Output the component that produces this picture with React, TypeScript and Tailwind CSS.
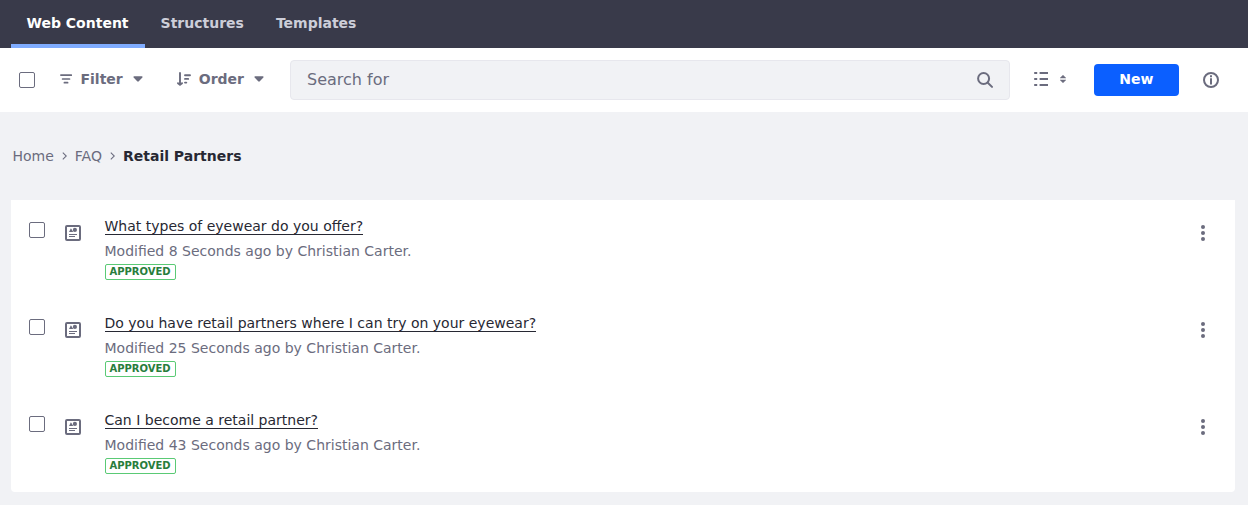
import React from "react";

const tabs = ["Web Content", "Structures", "Templates"];

const entries = [
  { title: "What types of eyewear do you offer?", age: "8 Seconds" },
  { title: "Do you have retail partners where I can try on your eyewear?", age: "25 Seconds" },
  { title: "Can I become a retail partner?", age: "43 Seconds" },
];

function Checkbox({ className = "" }: { className?: string }) {
  return (
    <input
      type="checkbox"
      aria-label="Select"
      className={`block size-4 shrink-0 appearance-none rounded-[2px] border border-[#6b6c7e] bg-white ${className}`}
    />
  );
}

function Caret() {
  return (
    <svg className="mb-[2px]" width="10" height="6" viewBox="0 0 10 6" fill="currentColor">
      <path d="M1.200 0.300h7.600c.8 0 1 .7.6 1.200L5.800 5.300a1.100 1.100 0 0 1-1.600 0L.6 1.500C.2 1 .4.3 1.200.3Z" />
    </svg>
  );
}

function Chevron() {
  return (
    <svg width="5" height="8" viewBox="0 0 5 8" fill="none" stroke="currentColor" strokeWidth="1.1">
      <path d="m.8.6 3.500 3.400L.8 7.400" />
    </svg>
  );
}

function FilterIcon() {
  return (
    <svg className="mb-[2px]" width="12" height="10" viewBox="0 0 12 10" fill="none" stroke="currentColor" strokeWidth="1.700" strokeLinecap="round">
      <path d="M.9 1.100h10.400M2.600 5h6.900M4.400 8.700h3.200" />
    </svg>
  );
}

function OrderIcon() {
  return (
    <svg className="mb-[2px]" width="14" height="14" viewBox="0 0 14 14" fill="none" stroke="currentColor" strokeWidth="1.900" strokeLinecap="round" strokeLinejoin="round">
      <path d="M3 1v11.400M1 11.200l2 1.700 2-1.700M8 3.200h5M8 6.900h3.200M8 10.600h1.300" />
    </svg>
  );
}

function SearchIcon() {
  return (
    <svg width="16" height="16" viewBox="0 0 16 16" fill="none" stroke="currentColor" strokeWidth="2" strokeLinecap="round">
      <circle cx="6.600" cy="6.500" r="5.500" />
      <path d="m10.800 10.700 4.200 4.200" />
    </svg>
  );
}

function ListIcon() {
  return (
    <svg width="14" height="14" viewBox="0 0 14 14" fill="currentColor">
      <path d="M.2 0h3v1.900h-3zM5.600 0H14v1.900H5.600zM.2 6.100h3V8h-3zM5.600 6.100H14V8H5.600zM.2 12.100h3V14h-3zM5.600 12.100H14V14H5.600z" />
    </svg>
  );
}

function SortIcon() {
  return (
    <svg width="6" height="8" viewBox="0 0 6 8" fill="currentColor" stroke="currentColor" strokeWidth=".6" strokeLinejoin="round">
      <path d="M3 .3 5.700 2.900H.3zM.3 5.100h5.400L3 7.700z" />
    </svg>
  );
}

function InfoIcon() {
  return (
    <svg width="16" height="16" viewBox="0 0 16 16" fill="none" stroke="currentColor" strokeWidth="2">
      <circle cx="8" cy="8" r="7" />
      <path d="M8 3.300v1.900M8 6.200v6.300" />
    </svg>
  );
}

function ArticleIcon() {
  return (
    <svg width="16" height="16" viewBox="0 0 16 16" fill="currentColor">
      <path fillRule="evenodd" d="M2 0h12a2 2 0 0 1 2 2v12a2 2 0 0 1-2 2H2a2 2 0 0 1-2-2V2a2 2 0 0 1 2-2ZM2 2v12h12V2Z" />
      <path d="M4 7 5.900 3.300 8.300 7zM4 9h8v1H4zM4 11h6v1H4z" />
      <circle cx="9.900" cy="4.900" r="2.100" />
    </svg>
  );
}

function KebabIcon() {
  return (
    <svg width="4" height="16" viewBox="0 0 4 16" fill="currentColor">
      <circle cx="2" cy="2" r="2" />
      <circle cx="2" cy="8" r="2" />
      <circle cx="2" cy="14" r="2" />
    </svg>
  );
}

export default function App() {
  return (
    <div className="h-[505px] w-[1248px] overflow-hidden bg-[#f1f2f5] font-['DejaVu_Sans',sans-serif] text-sm leading-[21px] text-[#6b6c7e]">
      <nav className="flex h-12 bg-[#393a4a] pl-[11px] font-bold text-[#cdced9]">
        {tabs.map((tab, i) => (
          <a
            key={tab}
            className={`flex h-12 items-center border-b-4 pt-[3px] pr-[16.5px] pl-[15.5px] ${
              i === 0 ? "border-[#80acff] text-white" : "border-transparent"
            }`}
          >
            {tab}
          </a>
        ))}
      </nav>

      <div className="flex h-16 items-center bg-white pl-[19px]">
        <Checkbox />
        <button className="ml-[25px] flex items-center font-bold">
          <FilterIcon />
          <span className="-mt-px ml-[8.5px] w-[52.5px] text-left">Filter</span>
          <Caret />
        </button>
        <button className="ml-[34px] flex items-center font-bold">
          <OrderIcon />
          <span className="-mt-px ml-[7.75px] w-[55.250px] text-left">Order</span>
          <Caret />
        </button>
        <div className="ml-[26px] flex h-10 w-[720px] items-center justify-between rounded border border-[#e7e7ed] bg-[#f1f2f5] pr-4 pl-4 text-base">
          <span>Search for</span>
          <SearchIcon />
        </div>
        <button className="mb-[2px] ml-6 flex items-center gap-3">
          <ListIcon />
          <SortIcon />
        </button>
        <button className="ml-7 h-8 w-[85px] rounded bg-[#0b5fff] pr-[0.5px] pb-px font-bold text-white">New</button>
        <button className="ml-6">
          <InfoIcon />
        </button>
      </div>

      <div className="flex h-[88px] items-center pl-[12.5px]">
        <span>Home</span>
        <span className="mr-[7.5px] ml-[8.5px]"><Chevron /></span>
        <span>FAQ</span>
        <span className="mr-[7.5px] ml-[8.5px]"><Chevron /></span>
        <span className="font-bold text-[#272833]">Retail Partners</span>
      </div>

      <ul className="ml-[11px] h-[292px] w-[1224px] rounded-b bg-white">
        {entries.map((entry) => (
          <li key={entry.title} className="flex h-[97px] pt-4 pr-[30px] pl-[18px]">
            <Checkbox className="mt-1.5" />
            <span className="mt-[9px] ml-5"><ArticleIcon /></span>
            <div className="ml-[23.5px] flex-1">
              <div className="flex h-[25px]">
                <a className="h-[19px] border-b border-[#272833] text-[#272833]">{entry.title}</a>
              </div>
              <p className="h-[23px]">Modified {entry.age} ago by Christian Carter.</p>
              <span className="flex h-4 w-[71px] items-center justify-center rounded-[2px] border border-[#5aca75] text-[10px] leading-3 font-bold text-[#287d3c]">
                APPROVED
              </span>
            </div>
            <button className="mt-[9px] h-4"><KebabIcon /></button>
          </li>
        ))}
      </ul>
    </div>
  );
}
